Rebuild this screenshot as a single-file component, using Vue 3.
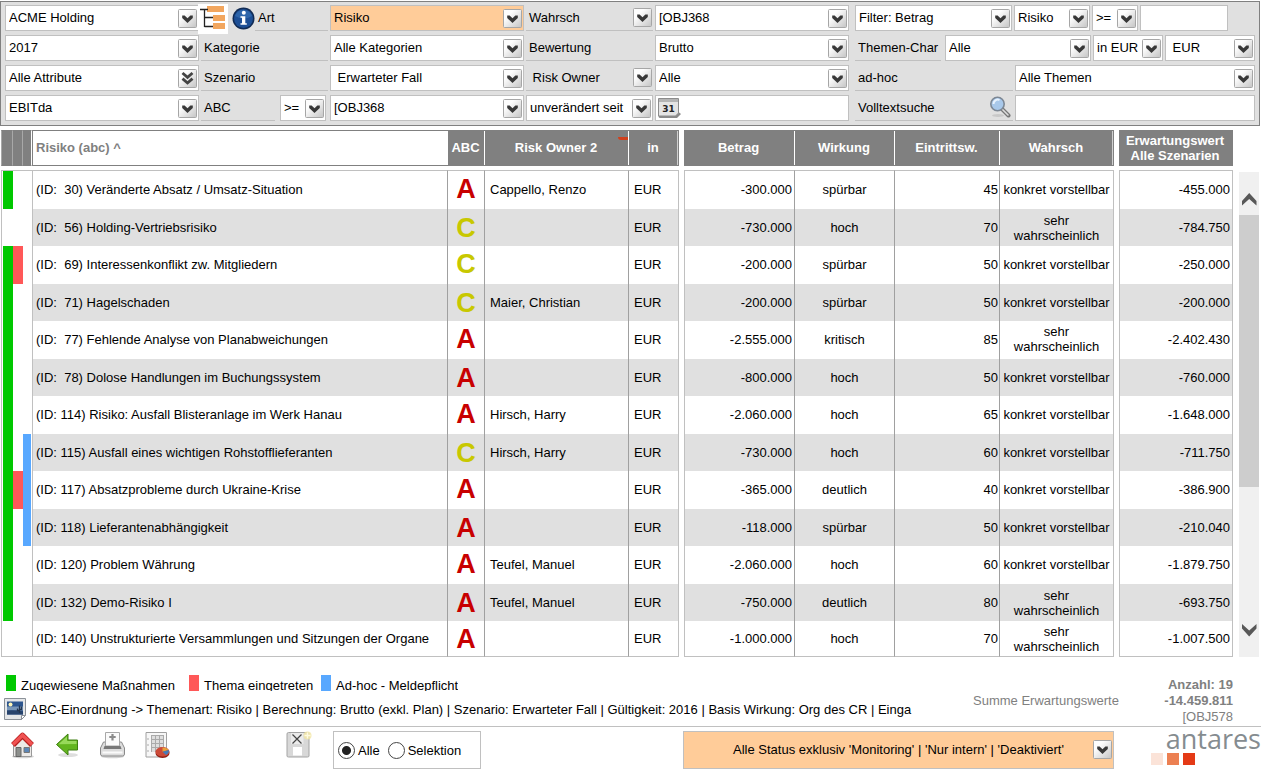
<script setup>
import { ref } from 'vue'

const nb = '\u00a0'
const scope = ref('alle')
const search = ref('')
const since = ref('')
const amount = ref('')

const grades = { A: 'grade-a', C: 'grade-c' }

const rows = [
  { id: 30, name: 'Veränderte Absatz / Umsatz-Situation', abc: 'A', owner: 'Cappello, Renzo', amount: '-300.000', effect: 'spürbar', prob: 45, word: 'konkret vorstellbar', ev: '-455.000', g: true },
  { id: 56, name: 'Holding-Vertriebsrisiko', abc: 'C', owner: '', amount: '-730.000', effect: 'hoch', prob: 70, word: 'sehr wahrscheinlich', ev: '-784.750' },
  { id: 69, name: 'Interessenkonflikt zw. Mitgliedern', abc: 'C', owner: '', amount: '-200.000', effect: 'spürbar', prob: 50, word: 'konkret vorstellbar', ev: '-250.000', g: true, r: true },
  { id: 71, name: 'Hagelschaden', abc: 'C', owner: 'Maier, Christian', amount: '-200.000', effect: 'spürbar', prob: 50, word: 'konkret vorstellbar', ev: '-200.000', g: true },
  { id: 77, name: 'Fehlende Analyse von Planabweichungen', abc: 'A', owner: '', amount: '-2.555.000', effect: 'kritisch', prob: 85, word: 'sehr wahrscheinlich', ev: '-2.402.430', g: true },
  { id: 78, name: 'Dolose Handlungen im Buchungssystem', abc: 'A', owner: '', amount: '-800.000', effect: 'hoch', prob: 50, word: 'konkret vorstellbar', ev: '-760.000', g: true },
  { id: 114, name: 'Risiko: Ausfall Blisteranlage im Werk Hanau', abc: 'A', owner: 'Hirsch, Harry', amount: '-2.060.000', effect: 'hoch', prob: 65, word: 'konkret vorstellbar', ev: '-1.648.000', g: true },
  { id: 115, name: 'Ausfall eines wichtigen Rohstofflieferanten', abc: 'C', owner: 'Hirsch, Harry', amount: '-730.000', effect: 'hoch', prob: 60, word: 'konkret vorstellbar', ev: '-711.750', g: true, b: true },
  { id: 117, name: 'Absatzprobleme durch Ukraine-Krise', abc: 'A', owner: '', amount: '-365.000', effect: 'deutlich', prob: 40, word: 'konkret vorstellbar', ev: '-386.900', g: true, r: true, b: true },
  { id: 118, name: 'Lieferantenabhängigkeit', abc: 'A', owner: '', amount: '-118.000', effect: 'spürbar', prob: 50, word: 'konkret vorstellbar', ev: '-210.040', g: true, b: true },
  { id: 120, name: 'Problem Währung', abc: 'A', owner: 'Teufel, Manuel', amount: '-2.060.000', effect: 'hoch', prob: 60, word: 'konkret vorstellbar', ev: '-1.879.750', g: true },
  { id: 132, name: 'Demo-Risiko I', abc: 'A', owner: 'Teufel, Manuel', amount: '-750.000', effect: 'deutlich', prob: 80, word: 'sehr wahrscheinlich', ev: '-693.750', g: true },
  { id: 140, name: 'Unstrukturierte Versammlungen und Sitzungen der Organe', abc: 'A', owner: '', amount: '-1.000.000', effect: 'hoch', prob: 70, word: 'sehr wahrscheinlich', ev: '-1.007.500' },
]

const title = (row) => `(ID: ${row.id < 100 ? nb : ''}${row.id}) ${row.name}`
</script>

<template>
  <div class="page">
    <svg class="defs" aria-hidden="true">
      <defs>
        <linearGradient id="face" x1="0" y1="0" x2="1" y2="1">
          <stop offset="0.3" stop-color="#fdfdfd" />
          <stop offset="1" stop-color="#c4c4c4" />
        </linearGradient>
        <symbol id="drop" viewBox="0 0 19 19">
          <rect x="0.5" y="0.5" width="18" height="18" rx="1" fill="url(#face)" stroke="#a6a6a6" />
          <path d="M4.2 6.5 6.6 6.5 9.5 9.3 12.4 6.5 14.8 6.500 14.8 9 9.5 14 4.2 9Z" fill="#383838" />
        </symbol>
        <symbol id="drop2" viewBox="0 0 19 19">
          <rect x="0.5" y="0.5" width="18" height="18" rx="1" fill="url(#face)" stroke="#a6a6a6" />
          <path d="M4.5 4 9.5 8.4 14.5 4M4.5 9.6 9.5 14 14.5 9.6" fill="none" stroke="#444" stroke-width="2.800" />
        </symbol>
      </defs>
    </svg>

    <form class="filters" @submit.prevent>
      <div class="cell">
        <div class="pick grow"><select aria-label="Gesellschaft"><option>ACME Holding</option></select><svg class="arrow"><use href="#drop" /></svg></div>
      </div>
      <div class="cell">
        <button type="button" class="tree" aria-label="Struktur">
          <svg viewBox="0 0 30 30" width="30" height="30">
            <path d="M9 2h17v6H9zM15 11h12v6H15zM15 19h12v6H15z" fill="#f2a65e" />
            <path d="M2 5.500H10M6.500 5.500V23M6.500 13.500H15M6.500 22.500H15" fill="none" stroke="#222" stroke-width="1.300" />
          </svg>
        </button>
        <button type="button" class="info" aria-label="Information">
          <svg viewBox="0 0 23 23" width="23" height="23">
            <circle cx="11.500" cy="11.500" r="11" fill="#122c55" />
            <circle cx="11.500" cy="11.500" r="9.500" fill="#1d4f96" />
            <path d="M3 9a9 9 0 0 1 17 0q-8 5-17 0" fill="#3a74b8" opacity=".6" />
            <circle cx="11.800" cy="5.800" r="2" fill="#fff" />
            <path d="M8.500 9.200h4.800v7h1.500v1.600H8.500v-1.600H10v-5.400H8.500z" fill="#fff" />
          </svg>
        </button>
        <label class="tag grow" for="art">Art</label>
      </div>
      <div class="cell">
        <div class="pick grow hot"><select id="art"><option>Risiko</option></select><svg class="arrow"><use href="#drop" /></svg></div>
      </div>
      <div class="cell">
        <label class="tag grow" for="wahrsch">Wahrsch</label>
        <button type="button" class="side" aria-label="Wahrsch wählen"><svg><use href="#drop" /></svg></button>
      </div>
      <div class="cell">
        <div class="pick grow"><select id="wahrsch"><option>[OBJ368</option></select><svg class="arrow"><use href="#drop" /></svg></div>
      </div>
      <div class="cell last">
        <div class="pick grow"><select aria-label="Filter"><option>Filter: Betrag</option></select><svg class="arrow"><use href="#drop" /></svg></div>
        <div class="pick w76"><select aria-label="Filterart"><option>Risiko</option></select><svg class="arrow"><use href="#drop" /></svg></div>
        <div class="pick w46"><select aria-label="Vergleich Betrag"><option>&gt;=</option></select><svg class="arrow"><use href="#drop" /></svg></div>
        <input v-model="amount" class="text w88" type="text" aria-label="Betrag" />
      </div>

      <div class="cell">
        <div class="pick grow"><select aria-label="Jahr"><option>2017</option></select><svg class="arrow"><use href="#drop" /></svg></div>
      </div>
      <div class="cell"><label class="tag grow" for="kategorie">Kategorie</label></div>
      <div class="cell">
        <div class="pick grow"><select id="kategorie"><option>Alle Kategorien</option></select><svg class="arrow"><use href="#drop" /></svg></div>
      </div>
      <div class="cell"><label class="tag grow" for="bewertung">Bewertung</label></div>
      <div class="cell">
        <div class="pick grow"><select id="bewertung"><option>Brutto</option></select><svg class="arrow"><use href="#drop" /></svg></div>
      </div>
      <div class="cell last">
        <label class="tag w86" for="themenchar">Themen-Char</label>
        <div class="pick grow"><select id="themenchar"><option>Alle</option></select><svg class="arrow"><use href="#drop" /></svg></div>
        <div class="pick w70"><select aria-label="Einheit"><option>in EUR</option></select><svg class="arrow"><use href="#drop" /></svg></div>
        <div class="pick w90"><select aria-label="Währung"><option>{{ nb }}EUR</option></select><svg class="arrow"><use href="#drop" /></svg></div>
      </div>

      <div class="cell">
        <div class="pick grow"><select aria-label="Attribute"><option>Alle Attribute</option></select><svg class="arrow"><use href="#drop2" /></svg></div>
      </div>
      <div class="cell"><label class="tag grow" for="szenario">Szenario</label></div>
      <div class="cell">
        <div class="pick grow"><select id="szenario"><option>{{ nb }}Erwarteter Fall</option></select><svg class="arrow"><use href="#drop" /></svg></div>
      </div>
      <div class="cell">
        <label class="tag grow" for="owner">{{ nb }}Risk Owner</label>
        <button type="button" class="side" aria-label="Risk Owner wählen"><svg><use href="#drop" /></svg></button>
      </div>
      <div class="cell">
        <div class="pick grow"><select id="owner"><option>Alle</option></select><svg class="arrow"><use href="#drop" /></svg></div>
      </div>
      <div class="cell last">
        <label class="tag grow" for="adhoc">ad-hoc</label>
        <div class="pick w240"><select id="adhoc"><option>Alle Themen</option></select><svg class="arrow"><use href="#drop" /></svg></div>
      </div>

      <div class="cell">
        <div class="pick grow"><select aria-label="Kennzahl"><option>EBITda</option></select><svg class="arrow"><use href="#drop" /></svg></div>
      </div>
      <div class="cell wide">
        <label class="tag grow" for="abc">ABC</label>
        <div class="pick w46"><select aria-label="Vergleich ABC"><option>&gt;=</option></select><svg class="arrow"><use href="#drop" /></svg></div>
      </div>
      <div class="cell">
        <div class="pick grow"><select id="abc"><option>[OBJ368</option></select><svg class="arrow"><use href="#drop" /></svg></div>
      </div>
      <div class="cell">
        <div class="pick grow"><select aria-label="Änderungsstand"><option>unverändert seit</option></select><svg class="arrow"><use href="#drop" /></svg></div>
      </div>
      <div class="cell">
        <div class="date grow">
          <button type="button" aria-label="Kalender">
            <svg viewBox="0 0 25 22" width="25" height="22">
              <path d="M1.500 2h20v13l2.500 2-4 4H3q-1.500 0-1.500-2z" fill="#8a8a8a" />
              <path d="M1.500 1.500h20V16l-3 3h-17z" fill="#e4e4e4" stroke="#8c8c8c" />
              <path d="M2 2h19v3H2z" fill="#b4b4b4" />
              <text x="11.500" y="15" text-anchor="middle" font-family="DejaVu Sans, sans-serif" font-weight="bold" font-size="9" fill="#222">31</text>
            </svg>
          </button>
          <input v-model="since" type="text" aria-label="Datum" />
        </div>
      </div>
      <div class="cell last">
        <label class="tag grow" for="volltext">Volltextsuche
          <svg class="lens" viewBox="0 0 22 22" width="22" height="22">
            <ellipse cx="9" cy="19.500" rx="6" ry="1.500" fill="#c8c8c8" />
            <path d="M13.500 13.500 19.500 19.500" stroke="#777" stroke-width="4" stroke-linecap="round" />
            <path d="M13.500 13.500 19 19" stroke="#ddd" stroke-width="1.600" stroke-linecap="round" />
            <circle cx="8.500" cy="8" r="6.700" fill="#a8c8ea" stroke="#7c8794" stroke-width="1.600" />
            <path d="M4.500 8a4.300 4.300 0 0 1 6-4" fill="none" stroke="#e8f3ff" stroke-width="2" />
          </svg>
        </label>
        <input id="volltext" v-model="search" class="text w240" type="text" />
      </div>
    </form>

    <main class="board">
      <table class="panel risks">
        <colgroup><col class="c12" /><col class="c10" /><col class="c9" /><col /><col class="c37" /><col class="c144" /><col class="c50" /></colgroup>
        <thead>
          <tr>
            <th class="slot" aria-label="Maßnahmen"></th>
            <th class="slot" aria-label="Thema"></th>
            <th class="slot end" aria-label="Ad-hoc"></th>
            <th class="sorted">Risiko (abc) ^</th>
            <th>ABC</th>
            <th class="owner-head">Risk Owner 2<span class="mark"></span></th>
            <th>in</th>
          </tr>
        </thead>
        <tbody>
          <tr class="space" aria-hidden="true"><td colspan="7"></td></tr>
          <tr v-for="row in rows" :key="row.id" class="row">
            <td class="flag first" :class="{ green: row.g }"></td>
            <td class="flag" :class="{ red: row.r }"></td>
            <td class="flag third" :class="{ blue: row.b }"></td>
            <td class="name">{{ title(row) }}</td>
            <td class="grade" :class="grades[row.abc]">{{ row.abc }}</td>
            <td class="owner">{{ row.owner }}</td>
            <td class="unit edge">EUR</td>
          </tr>
        </tbody>
      </table>

      <table class="panel values">
        <colgroup><col class="c111" /><col class="c100" /><col class="c105" /><col class="c114" /></colgroup>
        <thead>
          <tr><th>Betrag</th><th>Wirkung</th><th>Eintrittsw.</th><th>Wahrsch</th></tr>
        </thead>
        <tbody>
          <tr class="space" aria-hidden="true"><td colspan="4"></td></tr>
          <tr v-for="row in rows" :key="row.id" class="row">
            <td class="num start">{{ row.amount }}</td>
            <td class="mid">{{ row.effect }}</td>
            <td class="num tight">{{ row.prob }}</td>
            <td class="mid edge">{{ row.word }}</td>
          </tr>
        </tbody>
      </table>

      <table class="panel expected">
        <thead>
          <tr><th class="plain">Erwartungswert Alle Szenarien</th></tr>
        </thead>
        <tbody>
          <tr class="space" aria-hidden="true"><td></td></tr>
          <tr v-for="row in rows" :key="row.id" class="row">
            <td class="num start edge">{{ row.ev }}</td>
          </tr>
        </tbody>
      </table>

      <div class="scroll">
        <button type="button" aria-label="Nach oben"><svg viewBox="0 0 20 43"><path d="M3 29V33.500L10.200 27 17.500 33.500V29L10.200 21Z" fill="#585858" /></svg></button>
        <div class="thumb"></div>
        <div class="track"></div>
        <button type="button" aria-label="Nach unten"><svg viewBox="0 0 20 43"><path d="M3 14.500V10L10.200 16.500 17.500 10V14.500L10.200 22.500Z" fill="#585858" /></svg></button>
      </div>
    </main>

    <section class="notes">
      <div class="notes-left">
        <div class="legend">
          <span class="key k183"><i class="green"></i>Zugewiesene Maßnahmen</span>
          <span class="key k132"><i class="red"></i>Thema eingetreten</span>
          <span class="key"><i class="blue"></i>Ad-hoc - Meldepflicht</span>
        </div>
        <div class="basis">
          <svg viewBox="0 0 22 22" width="22" height="22">
            <path d="M.5.500h21v17l-4 4H.5z" fill="#e4e6e8" stroke="#8b9198" />
            <path d="M3 3.500h16v13H3z" fill="#2c558e" />
            <path d="M3 8.500h16v4H3z" fill="#7896b8" />
            <path d="M3 12.500q7-1 16 1v3H3z" fill="#27436c" />
            <circle cx="6.500" cy="6.500" r="2" fill="#fff6b8" />
            <path d="M15.500 15V7.500M13.500 10.500v2h2M17.500 8.500v3h-2" fill="none" stroke="#22344e" stroke-width="1.300" />
            <path d="M17.500 21.500v-4h4z" fill="#fff" stroke="#8b9198" />
          </svg>
          <span>ABC-Einordnung -&gt; Themenart: Risiko | Berechnung: Brutto (exkl. Plan) | Szenario: Erwarteter Fall | Gültigkeit: 2016 | Basis Wirkung: Org des CR | Einga</span>
        </div>
      </div>
      <div class="sum-label">Summe Erwartungswerte</div>
      <div class="totals"><b>Anzahl: 19</b><b>-14.459.811</b><span>[OBJ578</span></div>
    </section>

    <footer class="bar">
      <nav class="tools">
        <button type="button" aria-label="Startseite">
          <svg viewBox="0 0 25 28" width="25" height="28">
            <ellipse cx="13" cy="25.500" rx="11" ry="1.800" fill="#d4d4d4" />
            <path d="M3.500 13 12.500 4l9 9v12.500h-18z" fill="#eceae8" stroke="#999" />
            <path d="M6 16.500h5v9H6z" fill="#8c8f8c" stroke="#666" />
            <path d="M14 16.500h5.500v5H14z" fill="#5b86b8" stroke="#777" />
            <path d="M3 14 12.500 4.500 22 14" fill="none" stroke="#b82020" stroke-width="5.500" stroke-linejoin="round" />
            <path d="M3 13.500 12.500 4.200 22 13.500" fill="none" stroke="#f05252" stroke-width="3.500" />
          </svg>
        </button>
        <button type="button" aria-label="Zurück">
          <svg viewBox="0 0 25 28" width="25" height="28">
            <ellipse cx="13" cy="24" rx="10" ry="2" fill="#dedede" />
            <path d="M1.500 13.500 13 3v6h9.500v10H13v5z" fill="#62b51e" stroke="#3f7f12" stroke-linejoin="round" />
            <path d="M3.500 13.300 12 5.500V10h9.500v3z" fill="#97d95a" />
          </svg>
        </button>
        <button type="button" aria-label="Drucken">
          <svg viewBox="0 0 25 28" width="25" height="28">
            <ellipse cx="12.500" cy="25.500" rx="11.500" ry="1.800" fill="#d4d4d4" />
            <path d="M3.500 11h18l3 6v6q0 2-2 2h-20q-2 0-2-2v-6z" fill="#dcdcdc" stroke="#8a8a8a" />
            <path d="M5.500 1.500h14V15h-14z" fill="#fafafa" stroke="#a8a8a8" />
            <path d="M12.500 3v6.500M9.300 6h6.400" stroke="#8a8a8a" stroke-width="2.200" />
            <path d="M4.500 15h16l1 3h-18z" fill="#777" />
            <path d="M2.500 21.500h20" stroke="#fafafa" stroke-width="2" />
          </svg>
        </button>
        <button type="button" aria-label="Bericht">
          <svg viewBox="0 0 25 28" width="25" height="28">
            <path d="M1 1.500h20.500V26H1z" fill="#f7f7f7" stroke="#a0a0a0" />
            <path d="M3 8v.1M3 14v.1M3 20v.1" stroke="#999" stroke-width="1.500" stroke-linecap="round" />
            <path d="M6 4h13v17H6z" fill="#dedede" />
            <path d="M6 4.500h13M6 8.500h13M6 12.500h13M6 16.500h13M6.500 4v17M10.500 4v17M14.500 4v17M18.500 4v17" stroke="#aaa" />
            <ellipse cx="17.500" cy="22" rx="7" ry="5" fill="#8f1d12" />
            <ellipse cx="17.500" cy="20.800" rx="7" ry="4.800" fill="#cc4a38" />
            <path d="M17.500 20.800V16.500q4.500 0 6 2.500z" fill="#e8a33a" />
            <path d="M17.500 20.800 23.800 19q.8 3-2.800 5z" fill="#447bb8" />
          </svg>
        </button>
      </nav>
      <button type="button" class="save" aria-label="Ansicht speichern">
        <svg viewBox="0 0 26 28" width="26" height="28">
          <path d="M1 3q0-1.500 1.500-1.500h19q1.500 0 1.500 1.500v22q0 1-1.500 1h-19Q1 26 1 25z" fill="#d8d8d8" stroke="#a4a4a4" />
          <path d="M5 2h12.500v11H5z" fill="#ebebeb" />
          <path d="M6.500 3.500 15.500 12.500M15.500 3.500 6.500 12.500" stroke="#444" stroke-width="1.200" />
          <path d="M7 16h9v8.500H7z" fill="#fff" />
          <circle cx="21.500" cy="4.500" r="4" fill="#f2e6a4" opacity=".8" />
          <path d="M21.500 1.500v6M18.500 4.500h6" stroke="#fffbe0" stroke-width="1.500" />
        </svg>
      </button>
      <div class="choice" role="radiogroup" aria-label="Umfang">
        <label><input v-model="scope" type="radio" name="scope" value="alle" />Alle</label>
        <label><input v-model="scope" type="radio" name="scope" value="selektion" />Selektion</label>
      </div>
      <div class="pick hot status"><select aria-label="Status"><option>Alle Status exklusiv 'Monitoring' | 'Nur intern' | 'Deaktiviert'</option></select><svg class="arrow"><use href="#drop" /></svg></div>
      <div class="logo"><span>antares</span><div class="blocks"><i></i><i></i><i></i></div></div>
    </footer>
  </div>
</template>

<style>
body { margin: 0; background: #fff; }
</style>

<style scoped>
.page { padding-top: 1px; font: 13px/15px "Liberation Sans", Arial, sans-serif; color: #000; overflow: hidden; }
.page * { box-sizing: border-box; }
.defs { position: absolute; width: 0; height: 0; }
button { border: 0; padding: 0; background: none; display: block; flex: none; }
button svg { display: block; }
select, input { font: inherit; color: inherit; }

.filters {
  display: grid;
  grid-template-columns: 194fr 127fr 194fr 127fr 194fr 404fr;
  grid-auto-rows: 26px;
  gap: 4px 2px;
  margin-right: 1px;
  padding: 3px 4px 4px;
  background: #e0e0e0;
  border: 1px solid #808080;
}
.cell { display: flex; gap: 2px; min-width: 0; }
.cell.last { padding-left: 4px; }
.cell.wide { gap: 5px; padding-right: 2px; }
.grow { flex: 1; min-width: 0; }
.w46 { width: 46px; }
.w70 { width: 70px; }
.w76 { width: 76px; }
.w86 { width: 86px; margin-right: 2px; }
.w88 { width: 88px; margin-right: 27px; }
.w90 { width: 90px; }
.w240 { width: 240px; }

.pick { position: relative; flex-shrink: 0; background: #fff; border: 1px solid #c0c0c0; }
.pick.grow { flex-shrink: 1; }
.pick select {
  display: block;
  width: 100%;
  height: 100%;
  padding: 0 20px 1px 3px;
  border: 0;
  background: transparent;
  appearance: none;
}
.arrow { position: absolute; right: 1px; top: 3px; width: 19px; height: 19px; pointer-events: none; }
.hot { background: #ffcc99; }
.text { border: 1px solid #c0c0c0; background: #fff; padding: 0 3px; min-width: 0; }

.tag { display: flex; justify-content: space-between; padding: 5px 0 0 3px; border-bottom: 1px solid #c0c0c0; white-space: nowrap; overflow: hidden; }
.cell .side { width: 19px; margin: 3px 1px 0 -22px; height: 19px; }
.side svg { width: 19px; height: 19px; }
.tree { width: 30px; height: 30px; margin: -1px 0 -3px -3px; background: #fff; position: relative; }
.info { margin: 1px -2px 0 2px; }
.lens { margin: -4px 2px 0 0; flex: none; }
.date { display: flex; align-items: center; background: #fff; border: 1px solid #c0c0c0; padding-left: 1px; }
.date input { flex: 1; min-width: 0; border: 0; background: transparent; padding: 0 3px; }

.board { display: flex; align-items: flex-start; gap: 5px; margin: 4px 2px 0 1px; }
.panel { border-collapse: separate; border-spacing: 0; table-layout: fixed; }
.risks { flex: 1; min-width: 0; width: 0; }
.values { width: 430px; flex: none; }
.expected { width: 114px; flex: none; }
.c9 { width: 9px; }
.c10 { width: 10px; }
.c12 { width: 12px; }
.c37 { width: 37px; }
.c50 { width: 50px; }
.c100 { width: 100px; }
.c105 { width: 105px; }
.c111 { width: 111px; }
.c114 { width: 114px; }
.c144 { width: 144px; }

th {
  height: 36px;
  padding: 0 2px 2px 0;
  color: #fff;
  font-weight: bold;
  background: linear-gradient(#fff, #fff) right 1px / 1px 34px no-repeat #808080;
}
th:last-child { background: linear-gradient(#d0d0d0, #d0d0d0) right 1px top 1px / 1px 34px no-repeat #808080; }
th.plain { background: #808080; padding-bottom: 0; }
th.slot { background: #808080; padding: 0; border: solid #808080; border-width: 1px 0; border-right: 1px solid #a8a8a8; }
th.slot:first-child { border-left: 1px solid #a8a8a8; }
th.slot.end { border-right-color: #fff; }
th.sorted { background: #fff; color: #808080; text-align: left; padding-left: 3px; border: 1px solid #808080; border-right: 0; }
.owner-head { position: relative; }
.mark { position: absolute; top: 7px; right: 1px; width: 10px; height: 3px; background: #d0401c; border-bottom-left-radius: 3px; }

.space td { height: 4px; padding: 0; }
.row td { height: 38px; padding: 0 0 2px; white-space: nowrap; border-right: 1px solid #a0a0a0; }
.row:nth-child(odd) td { height: 37px; padding-bottom: 0; background-color: #e0e0e0; }
.row:nth-child(2) td { height: 39px; border-top: 1px solid #c0c0c0; }
.row:last-child td { height: 36px; padding-bottom: 0; border-bottom: 1px solid #c0c0c0; }
.row td.flag { border-right: 0; background-color: #fff; padding-bottom: 0; background-clip: content-box; }
.row td.first { border-left: 1px solid #c0c0c0; padding-left: 1px; }
.row td.third { padding-right: 1px; }
.row td.green, .key .green { background-color: #00c800; }
.row td.red, .key .red { background-color: #ff5858; }
.row td.blue, .key .blue { background-color: #58a8ff; }
.row td.name { padding-left: 3px; border-left: 1px solid #c0c0c0; }
.row td.grade { font-size: 27px; line-height: 30px; font-weight: bold; text-align: center; }
.grade-a { color: #c80000; }
.grade-c { color: #c8c800; }
.row td.owner { padding-left: 5px; }
.row td.unit { padding-left: 5px; }
.row td.edge { border-right-color: #c0c0c0; }
.row td.start { border-left: 1px solid #c0c0c0; }
.row td.num { text-align: right; padding-right: 2px; }
.row td.tight { padding-right: 1px; }
.row td.mid { text-align: center; white-space: normal; }

.scroll { align-self: stretch; width: 20px; margin: 42px 0 0 1px; background: #f0f0f0; display: flex; flex-direction: column; }
.scroll button, .scroll svg { width: 20px; height: 43px; }
.thumb { flex: 272; background: #cdcdcd; }
.track { flex: 127; }

.notes { display: flex; height: 69px; padding-right: 28px; color: #808080; }
.notes-left { flex: 1; min-width: 0; padding-top: 18px; color: #000; }
.legend { display: flex; padding-left: 6px; }
.key { display: flex; gap: 5px; height: 16px; line-height: 21px; overflow: hidden; white-space: nowrap; }
.key i { width: 10px; height: 16px; }
.k183 { width: 183px; }
.k132 { width: 132px; }
.basis { display: flex; align-items: center; gap: 4px; margin-top: 7px; padding-left: 4px; white-space: nowrap; }
.sum-label { width: 148px; margin-top: 36px; white-space: nowrap; overflow: hidden; }
.totals { display: flex; flex-direction: column; width: 112px; padding-top: 20px; line-height: 16px; text-align: right; }

.bar { display: flex; align-items: flex-start; border-top: 1px solid #c0c0c0; padding: 4px 0 0 10px; }
.tools { display: flex; gap: 20px; }
.save { margin-left: 116px; }
.choice { display: flex; align-items: center; gap: 8px; width: 148px; height: 38px; margin-left: 21px; padding-left: 4px; border: 1px solid #c0c0c0; }
.choice label { display: flex; align-items: center; gap: 3px; }
.choice input { appearance: none; width: 17px; height: 17px; margin: 0; border: 1px solid #444; border-radius: 50%; background: #fff; }
.choice input:checked { background: radial-gradient(circle, #222 4px, #fff 5px); }
.pick.status { width: 431px; height: 38px; margin-left: auto; }
.pick.status select { padding: 0 20px 2px; text-align: center; text-align-last: center; }
.status .arrow { top: 8px; right: 1px; }
.logo { width: 111px; margin: -4px 0 0 36px; text-align: right; color: #858c90; }
.logo span { display: block; height: 26px; font: 27px/24px "Open Sans", "Noto Sans", sans-serif; }
.blocks { display: flex; gap: 4px; padding-left: 1px; }
.blocks i { width: 12px; height: 12px; background: #fbe3d8; }
.blocks i:nth-child(2) { background: #ec8052; }
.blocks i:nth-child(3) { background: #e43a16; }
</style>
